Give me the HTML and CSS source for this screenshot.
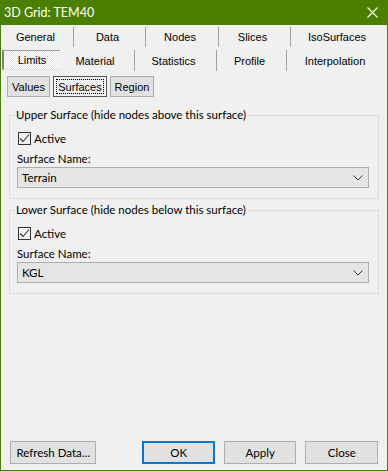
FILE: index.html
```html
<!DOCTYPE html>
<html lang="en">
<head>
  <meta charset="UTF-8" />
  <title>3D Grid: TEM40</title>
  <link rel="stylesheet" href="styles.css">
</head>
<body>
  <div class="window">
    <div class="titlebar">
      <span class="title">3D Grid: TEM40</span>
      <svg class="close-x" width="11" height="11" viewBox="0 0 11 11">
        <path d="M0.5 0.5 L10.5 10.5 M10.5 0.5 L0.5 10.5" stroke="#fff" stroke-width="1.1" fill="none"/>
      </svg>
    </div>

    <div class="tabs row1">
      <div class="tab">General</div>
      <div class="tab">Data</div>
      <div class="tab">Nodes</div>
      <div class="tab">Slices</div>
      <div class="tab last">IsoSurfaces</div>
    </div>
    <div class="tabs row2">
      <div class="tab selected">Limits</div>
      <div class="tab">Material</div>
      <div class="tab">Statistics</div>
      <div class="tab">Profile</div>
      <div class="tab last">Interpolation</div>
    </div>

    <div class="subtabs">
      <button class="sub values">Values</button>
      <button class="sub surfaces pressed"><span>Surfaces</span></button>
      <button class="sub region">Region</button>
    </div>

    <fieldset class="group">
      <legend>Upper Surface (hide nodes above this surface)</legend>
      <label class="check">
        <span class="box">
          <svg width="11" height="11" viewBox="0 0 11 11"><path d="M1 5.5 L4 8.5 L10 1.5" stroke="#333" stroke-width="1.1" fill="none"/></svg>
        </span>
        Active
      </label>
      <div class="field-label">Surface Name:</div>
      <div class="combo">
        <span>Terrain</span>
        <svg width="10" height="6" viewBox="0 0 10 6"><path d="M0.5 0.5 L5 5 L9.5 0.5" stroke="#333" stroke-width="1" fill="none"/></svg>
      </div>
    </fieldset>

    <fieldset class="group">
      <legend>Lower Surface (hide nodes below this surface)</legend>
      <label class="check">
        <span class="box">
          <svg width="11" height="11" viewBox="0 0 11 11"><path d="M1 5.5 L4 8.5 L10 1.5" stroke="#333" stroke-width="1.1" fill="none"/></svg>
        </span>
        Active
      </label>
      <div class="field-label">Surface Name:</div>
      <div class="combo">
        <span>KGL</span>
        <svg width="10" height="6" viewBox="0 0 10 6"><path d="M0.5 0.5 L5 5 L9.5 0.5" stroke="#333" stroke-width="1" fill="none"/></svg>
      </div>
    </fieldset>

    <div class="spacer"></div>

    <div class="footer">
      <button class="btn refresh">Refresh Data...</button>
      <button class="btn ok">OK</button>
      <button class="btn">Apply</button>
      <button class="btn">Close</button>
    </div>
  </div>
</body>
</html>
```

FILE: styles.css
```css
* {
  margin: 0;
  padding: 0;
  box-sizing: border-box;
}

body {
  background: #f0f0f0;
  font-family: Lato, "Noto Sans", sans-serif;
  font-size: 11.5px;
  color: #000;
}

.window {
  width: 388px;
  height: 471px;
  background: #f0f0f0;
  border: 1px solid #4a7f00;
  border-top: none;
  display: flex;
  flex-direction: column;
}

.titlebar {
  height: 25px;
  margin: 0 -1px;
  background: #4a7f00;
  color: #fff;
  display: flex;
  align-items: center;
  justify-content: space-between;
  padding: 0 10px 0 4px;
}

.title {
  font-size: 12.5px;
}

/* tab strip */
.tabs {
  display: grid;
  padding-left: 1px;
  font-family: "Liberation Sans", Arial, sans-serif;
  font-size: 11px;
}

.row1 {
  grid-template-columns: 72px 72px 73px 72px 1fr;
  height: 23px;
}

.row2 {
  grid-template-columns: 58px 75px 82px 70px 1fr;
  height: 24px;
  padding-top: 2px;
}

.tab {
  display: flex;
  align-items: center;
  justify-content: center;
  padding-right: 4px;
  border-right: 1px solid #a0a0a0;
  margin: 2px 0 1px;
}

.row2 .tab {
  margin: 0 0 1px;
}

.tab.last {
  border-right: none;
}

.tab.selected {
  border: 1px solid #a0a0a0;
  border-left: 2px solid #808080;
  border-right: none;
  border-bottom-color: #e0e0e0;
  background: repeating-conic-gradient(#fff 0 25%, #e4e4e4 0 50%) 0 0 / 2px 2px;
  margin: 0 0 2px;
  padding-right: 0;
}

/* sub buttons */
.subtabs {
  display: flex;
  gap: 3px;
  padding: 4px 0 0 6px;
  height: 26px;
}

.sub {
  font-family: "Liberation Sans", Arial, sans-serif;
  font-size: 11px;
  height: 21px;
  background: #e1e1e1;
  border: 1px solid #adadad;
  color: #000;
}

.values {
  width: 43px;
}

.surfaces {
  width: 54px;
}

.region {
  width: 44px;
}

.sub.pressed {
  border-color: #555;
  background: repeating-conic-gradient(#fff 0 25%, #e4e4e4 0 50%) 0 0 / 2px 2px;
  padding: 2px;
}

.sub.pressed span {
  display: block;
  height: 100%;
  line-height: 15px;
  border: 1px dotted #000;
}

/* group boxes */
.group {
  margin: 10px 8px 0 8px;
  border: 1px solid #dcdcdc;
  padding: 2px 9px 10px 7px;
}

.group + .group {
  margin-top: 4px;
}

.group legend {
  padding: 0 1px;
  margin-left: -2px;
  line-height: 14px;
}

.check {
  display: flex;
  align-items: center;
  gap: 3px;
  height: 13px;
  margin: 8px 0 0 1px;
}

.box {
  width: 13px;
  height: 13px;
  border: 1px solid #333;
  display: flex;
  align-items: center;
  justify-content: center;
}

.field-label {
  margin-top: 6px;
  line-height: 16px;
}

.combo {
  height: 21px;
  background: #e5e5e5;
  border: 1px solid #adadad;
  display: flex;
  align-items: center;
  justify-content: space-between;
  padding: 0 5px 0 4px;
}

.spacer {
  flex: 1;
}

/* dialog buttons */
.footer {
  display: flex;
  padding: 0 9px 6px 9px;
  gap: 9px;
}

.btn {
  font-family: Lato, "Noto Sans", sans-serif;
  font-size: 11.5px;
  height: 23px;
  width: 73px;
  background: #e1e1e1;
  border: 1px solid #adadad;
  color: #000;
}

.btn.refresh {
  width: 87px;
  margin-right: 37px;
}

.btn.ok {
  border: 2px solid #0078d7;
}
```
